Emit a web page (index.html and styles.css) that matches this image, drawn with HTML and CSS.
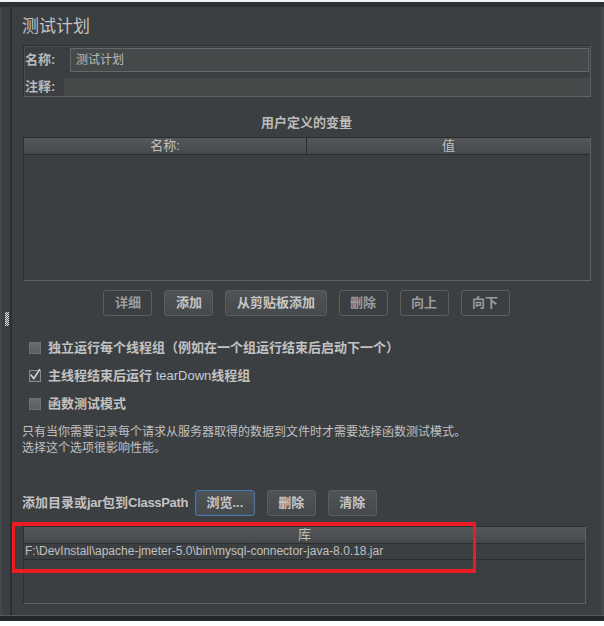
FILE: index.html
```html
<!DOCTYPE html>
<html lang="zh-CN">
<head>
<meta charset="utf-8">
<title>测试计划</title>
<link rel="stylesheet" href="styles.css">
</head>
<body>
<div class="screen">
  <div class="edge-top"></div>
  <div class="strip-top"></div>
  <div class="window">
    <div class="gutter"><div class="grip"></div></div>
    <div class="splitter"></div>
    <div class="content">
      <div class="title">测试计划</div>
      <div class="namebox">
        <div class="row row-name"><span class="lbl lbl-name">名称:</span><div class="field">测试计划</div></div>
        <div class="row row-comment"><span class="lbl lbl-comment">注释:</span><div class="field2"></div></div>
      </div>
      <div class="section-title">用户定义的变量</div>
      <div class="table vars">
        <div class="thead"><div class="th th-name">名称:</div><div class="th th-value">值</div></div>
        <div class="tbody"></div>
      </div>
      <div class="btnrow">
        <button class="btn">详细</button>
        <button class="btn on">添加</button>
        <button class="btn on">从剪贴板添加</button>
        <button class="btn">删除</button>
        <button class="btn">向上</button>
        <button class="btn">向下</button>
      </div>
      <div class="checks">
        <div class="cb-row"><span class="cb"></span><span>独立运行每个线程组（例如在一个组运行结束后启动下一个）</span></div>
        <div class="cb-row"><span class="cb checked"><svg width="12" height="12" viewBox="0 0 12 12"><path d="M2.2 6.2 L4.8 9.6 L10.4 0.8" fill="none" stroke="#d6d6d6" stroke-width="1.6" stroke-linecap="square"/></svg></span><span>主线程结束后运行 <span class="latin">tearDown</span>线程组</span></div>
        <div class="cb-row"><span class="cb"></span><span>函数测试模式</span></div>
      </div>
      <p class="desc">只有当你需要记录每个请求从服务器取得的数据到文件时才需要选择函数测试模式。<br>选择这个选项很影响性能。</p>
      <div class="cprow">
        <span class="cplabel">添加目录或<span class="tight">jar</span>包到<span class="tight">ClassPath</span></span>
        <button class="btn on focus">浏览...</button>
        <button class="btn on">删除</button>
        <button class="btn on">清除</button>
      </div>
      <div class="lib-wrap">
        <div class="table lib">
          <div class="thead"><div class="th th-lib">库</div></div>
          <div class="tr">F:\DevInstall\apache-jmeter-5.0\bin\mysql-connector-java-8.0.18.jar</div>
          <div class="tbody"></div>
        </div>
        <div class="annot"></div>
      </div>
    </div>
    <div class="edge-right"></div>
  </div>
  <div class="bottom-line"></div>
  <div class="bottom-strip"></div>
</div>
</body>
</html>
```

FILE: styles.css
```css
* { box-sizing: border-box; }
html, body { margin: 0; padding: 0; }
body {
  background: #ffffff;
  width: 604px;
  height: 626px;
  overflow: hidden;
  font-family: "Liberation Sans", "Noto Sans CJK SC", sans-serif;
  color: #bbbbbb;
}
.screen {
  width: 604px;
  height: 621px;
  display: flex;
  flex-direction: column;
  background: #3c3f41;
}
.edge-top { height: 2px; background: #f2f2f2; }
.strip-top { height: 5px; background: #2e3133; }
.window { height: 608px; display: flex; }
.gutter {
  width: 10px;
  border-left: 2px solid #45484a;
  padding-top: 305px;
  padding-left: 3px;
}
.grip {
  width: 4px;
  height: 14px;
  background: repeating-conic-gradient(#dcdcdc 0 25%, #5c5f61 0 50%) 0 0 / 2px 2px;
}
.splitter { width: 2px; background: #2c2f31; }
.content {
  flex: 1;
  display: flex;
  flex-direction: column;
  align-items: flex-start;
}
.edge-right { width: 3px; background: #45484a; }
.bottom-line { height: 1px; background: #56595b; }
.bottom-strip { height: 5px; background: #24272a; }

.title {
  margin: 10px 0 0 10px;
  font-size: 17px;
  line-height: 20px;
  height: 20px;
  color: #c2c2c2;
}

.namebox {
  margin: 8px 0 0 11px;
  width: 568px;
  height: 52px;
  padding: 2px 1px 0 1px;
  border: 1px solid;
  border-color: #2b2d2f #5f6264 #5f6264 #2b2d2f;
  box-shadow: inset 1px 1px 0 #4b4e50;
  display: flex;
  flex-direction: column;
  gap: 6px;
}
.row { display: flex; align-items: center; }
.row-name { height: 24px; }
.row-comment { height: 18px; }
.lbl {
  font-size: 13px;
  font-weight: bold;
  line-height: 16px;
  white-space: nowrap;
}
.lbl-name { width: 45px; }
.lbl-comment { width: 39px; }
.field {
  flex: 1;
  height: 24px;
  border: 1px solid #65686a;
  background: #45494a;
  font-size: 12px;
  line-height: 22px;
  padding-left: 5px;
}
.field2 {
  flex: 1;
  height: 18px;
  background: #45494a;
  margin-right: -1px;
}

.section-title {
  align-self: center;
  margin-top: 18px;
  font-size: 13px;
  font-weight: bold;
  line-height: 16px;
  height: 16px;
}

.table {
  border: 1px solid;
  border-color: #2b2d2f #5f6264 #5f6264 #2b2d2f;
  display: flex;
  flex-direction: column;
}
.thead {
  height: 17px;
  display: flex;
  background: linear-gradient(#54585a, #46494b);
  border-bottom: 1px solid #2b2d2f;
}
.th {
  font-size: 13px;
  line-height: 16px;
  text-align: center;
  color: #c0c0c0;
}
.tbody { flex: 1; }
.vars {
  margin: 6px 0 0 11px;
  width: 568px;
  height: 144px;
}
.th-name { width: 283px; border-right: 1px solid #2b2d2f; }
.th-value { flex: 1; }

.btnrow {
  align-self: center;
  margin-top: 9px;
  display: flex;
  gap: 12px;
}
.btn {
  margin: 0;
  height: 26px;
  padding: 0 10.5px;
  border: 1px solid #5b5e60;
  border-radius: 3px;
  font-family: inherit;
  font-size: 13px;
  font-weight: bold;
  line-height: 24px;
  color: #9a9c9e;
  background: transparent;
  white-space: nowrap;
}
.btn.on {
  color: #c6c6c6;
  background: linear-gradient(#505457, #46494c);
}
.btn.focus {
  border-color: #52769e;
  box-shadow: inset 0 0 0 1px #3d5674;
}

.checks {
  margin-top: 18px;
  padding-left: 17px;
  display: flex;
  flex-direction: column;
}
.cb-row {
  height: 28px;
  display: flex;
  align-items: center;
  gap: 7px;
  font-size: 13px;
  font-weight: bold;
  line-height: 16px;
  white-space: nowrap;
  color: #c2c2c2;
}
.cb {
  width: 12px;
  height: 12px;
  flex: none;
  background: linear-gradient(#6a6d6f, #5b5e60);
  border: 1px solid #6e7173;
}
.cb.checked {
  background: #45484a;
  border-color: #8a8d8f;
  position: relative;
}
.cb.checked svg {
  position: absolute;
  left: -1px;
  top: -2px;
  overflow: visible;
}
.latin {
  font-weight: normal;
  color: #c6cdd8;
}

.desc {
  margin: 6px 0 0 10px;
  font-size: 12px;
  line-height: 16px;
  color: #c0c0c0;
}

.cprow {
  margin: 34px 0 0 10px;
  display: flex;
  align-items: center;
  gap: 12px;
  height: 26px;
}
.cplabel {
  width: 161px;
  font-size: 13px;
  font-weight: bold;
  line-height: 16px;
  white-space: nowrap;
  color: #c2c2c2;
}
.tight { letter-spacing: -0.3px; }

.lib-wrap {
  position: relative;
  margin: 10px 0 0 11px;
  width: 563px;
  height: 78px;
}
.lib { width: 100%; height: 100%; }
.th-lib { flex: 1; }
.tr {
  height: 16px;
  border-bottom: 1px solid #2b2d2f;
  font-size: 12px;
  line-height: 15px;
  padding-left: 1px;
  white-space: nowrap;
  color: #c0c0c0;
}
.annot {
  position: absolute;
  left: -11px;
  top: -4px;
  width: 464px;
  height: 51px;
  border: 3px solid #ec1c24;
  border-top-width: 4px;
  border-bottom-width: 4px;
}
```
